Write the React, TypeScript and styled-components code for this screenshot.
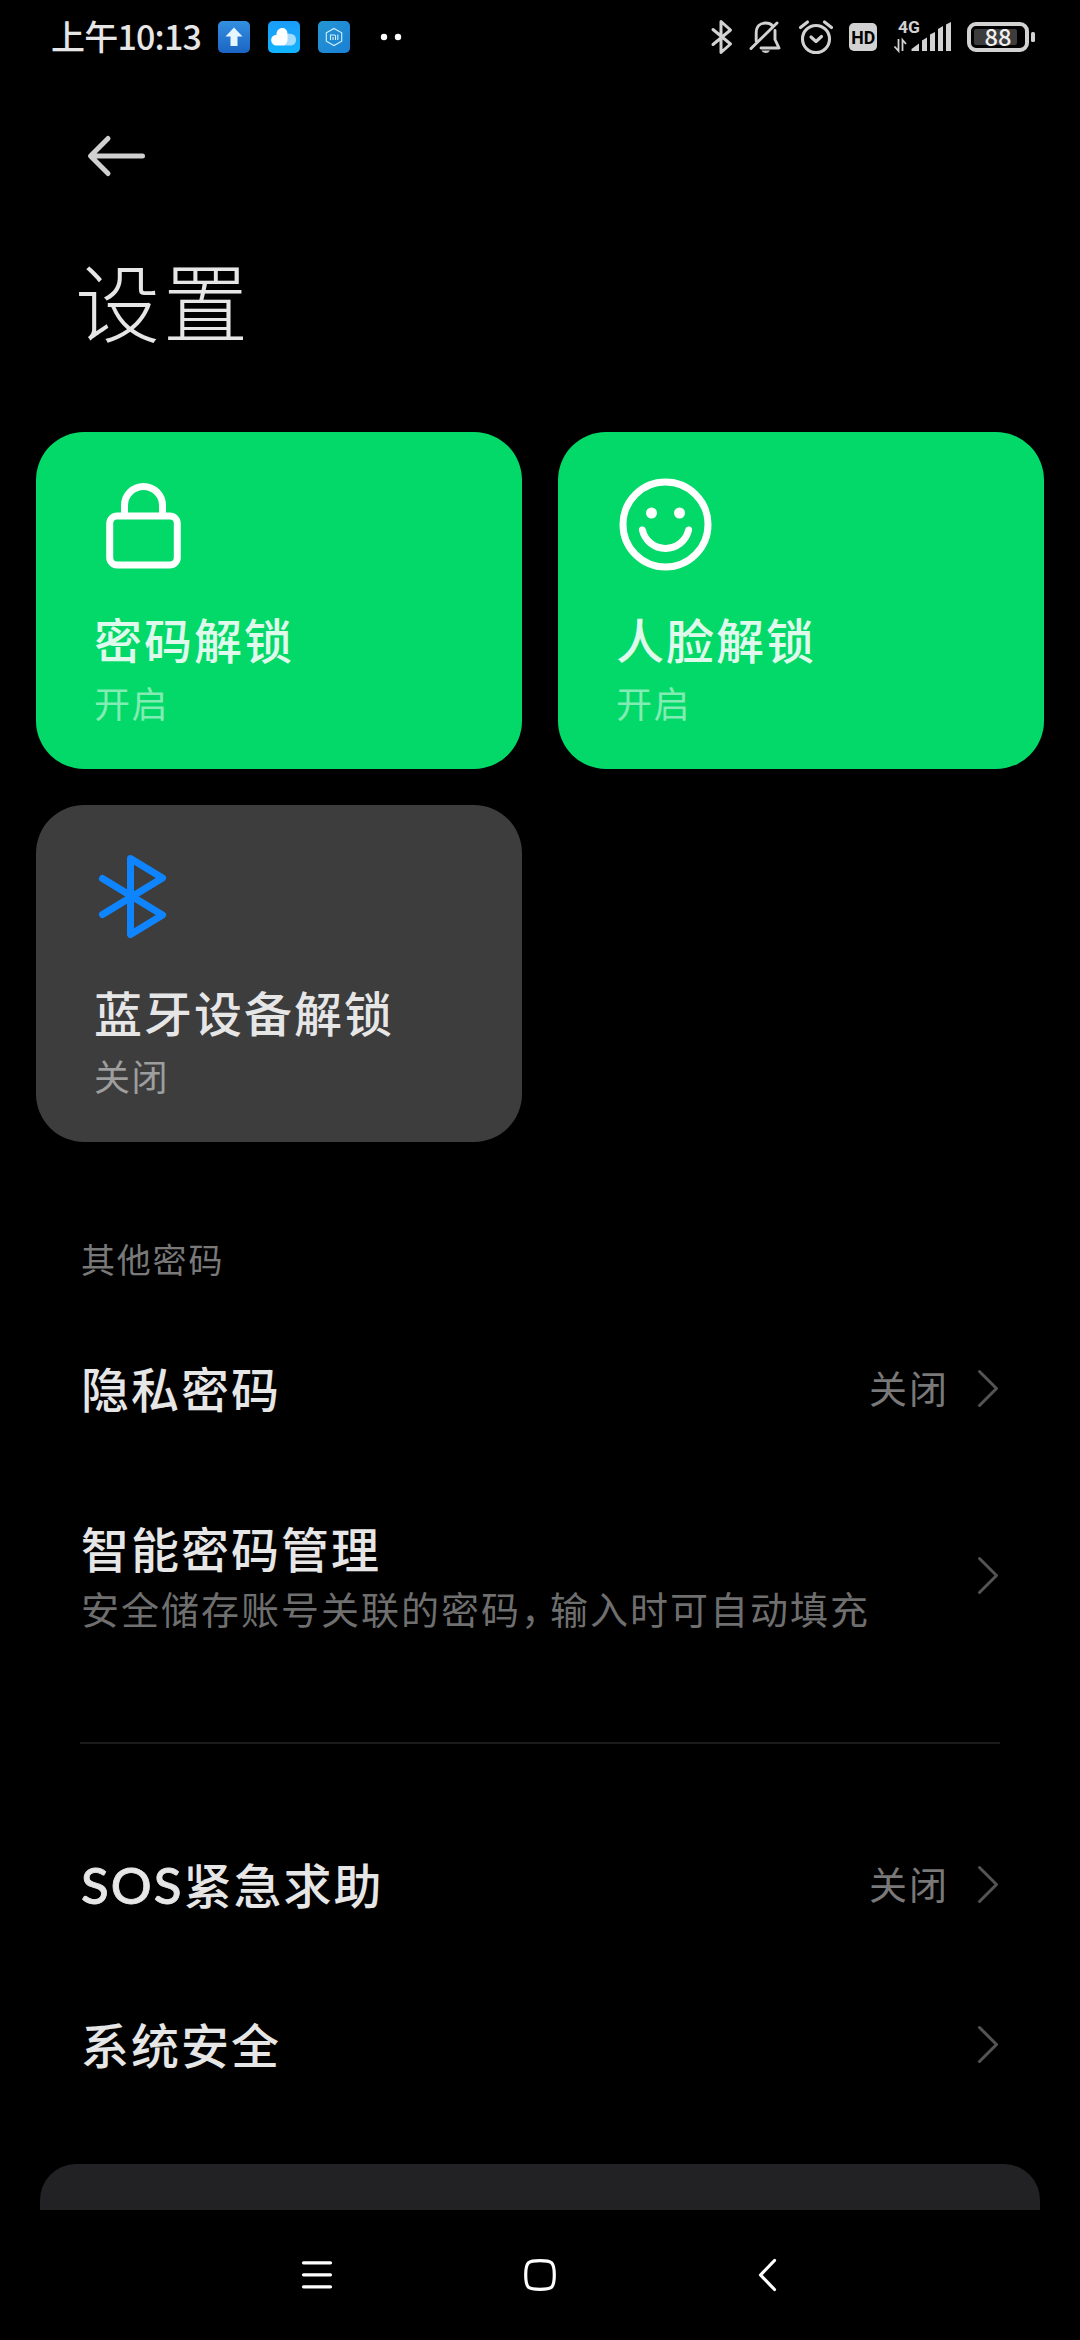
import React from "react";
import styled, { createGlobalStyle } from "styled-components";

const GlobalStyle = createGlobalStyle`
  * { box-sizing: border-box; }
  html, body { margin: 0; padding: 0; background: #000; }
  body { overflow: hidden; }
  svg { display: block; flex: none; }
`;

const Phone = styled.div`
  width: 1080px;
  height: 2340px;
  display: flex;
  flex-direction: column;
  background: #000;
  color: #e6e6e6;
  font-family: "Noto Sans CJK SC", "Noto Sans", sans-serif;
  overflow: hidden;
`;

const StatusBar = styled.header`
  height: 74px;
  flex: none;
  display: flex;
  align-items: center;
  justify-content: space-between;
  padding: 0 44px 0 51px;
`;

const StatusGroup = styled.div<{ $gap: number }>`
  display: flex;
  align-items: center;
  gap: ${(p) => p.$gap}px;
`;

const Clock = styled.div`
  width: 149px;
  margin-bottom: 2px;
  font-size: 34px;
  line-height: 50px;
  font-weight: 500;
  letter-spacing: -0.8px;
  white-space: nowrap;
`;

const Screen = styled.main`
  height: 2136px;
  flex: none;
  overflow: hidden;
`;

const TopBar = styled.div`
  height: 163px;
  display: flex;
  align-items: center;
  padding-left: 86px;
`;

const PageTitle = styled.h1`
  margin: 0 0 71px;
  padding-left: 75px;
  font-size: 85px;
  line-height: 124px;
  font-weight: 300;
  letter-spacing: 3px;
`;

const CardGrid = styled.section`
  display: grid;
  grid-template-columns: 486px 486px;
  grid-auto-rows: 337px;
  gap: 36px;
  padding: 0 36px;
`;

const Card = styled.div<{ $active: boolean }>`
  padding: 36px 0 0 58px;
  border-radius: 48px;
  background: ${(p) => (p.$active ? "#03d968" : "#3d3d3d")};
`;

const CardTitle = styled.div`
  margin-top: 26px;
  font-size: 48px;
  line-height: 64px;
  font-weight: 500;
  letter-spacing: 2px;
  color: rgba(255, 255, 255, 0.88);
`;

const CardState = styled.div`
  margin-top: 8px;
  font-size: 36px;
  line-height: 48px;
  letter-spacing: 1.5px;
  color: rgba(255, 255, 255, 0.5);
`;

const SectionLabel = styled.div`
  margin: 93px 0 25px;
  padding-left: 81px;
  font-size: 34px;
  line-height: 48px;
  letter-spacing: 1.8px;
  color: #797979;
`;

const Row = styled.div<{ $tall?: boolean }>`
  height: ${(p) => (p.$tall ? 214 : 160)}px;
  display: flex;
  align-items: center;
  padding: 0 80px 0 81px;
`;

const RowText = styled.div`
  flex: 1;
  white-space: nowrap;
`;

const RowTitle = styled.div<{ $single?: boolean }>`
  margin-bottom: ${(p) => (p.$single ? 2 : 0)}px;
  font-size: 48px;
  line-height: 66px;
  font-weight: 500;
  letter-spacing: 2px;
`;

const Latin = styled.span`
  font-family: Lato, "Noto Sans CJK SC", sans-serif;
  font-size: 51px;
  line-height: 1;
  letter-spacing: 2px;
  -webkit-text-stroke: 0.8px currentColor;
`;

const RowDetail = styled.div`
  font-size: 38px;
  line-height: 56px;
  letter-spacing: 2px;
  color: #6f6f6f;
`;

const Comma = styled.span`
  letter-spacing: -9px;
`;

const RowValue = styled.div`
  margin: 0 27px 2px 0;
  font-size: 38px;
  line-height: 56px;
  letter-spacing: 2px;
  color: #797979;
`;

const Divider = styled.hr`
  height: 2px;
  margin: 60px 80px;
  border: 0;
  background: #1a1a1a;
`;

const Panel = styled.div`
  height: 120px;
  margin: 40px 40px 0;
  border-radius: 36px;
  background: #222224;
`;

const NavBar = styled.nav`
  height: 130px;
  flex: none;
  display: flex;
  align-items: center;
  gap: 163px;
  padding-left: 287px;
`;

const tint = "#d2d2d2";

const UploadBadge = () => (
  <svg width="32" height="32" viewBox="0 0 32 32">
    <defs>
      <linearGradient id="upload" x1="0" y1="0" x2="0" y2="1">
        <stop offset="0" stopColor="#3390e0" />
        <stop offset="1" stopColor="#1b64c4" />
      </linearGradient>
    </defs>
    <rect width="32" height="32" rx="5" fill="url(#upload)" />
    <path d="M16 6.500 L24.500 15.500 H19.500 V25 H12.500 V15.500 H7.500 Z" fill="#e6f6ff" />
  </svg>
);

const CloudBadge = () => (
  <svg width="32" height="32" viewBox="0 0 32 32">
    <defs>
      <linearGradient id="cloud" x1="0" y1="0" x2="0" y2="1">
        <stop offset="0" stopColor="#1a9cf8" />
        <stop offset="1" stopColor="#12b4ff" />
      </linearGradient>
    </defs>
    <rect width="32" height="32" rx="5" fill="url(#cloud)" />
    <path d="M15 24.500 V17 a6 5.500 0 0 1 8-4 a5.800 5.800 0 0 1 0 11.500 Z" fill="#a3dcff" />
    <path d="M8.500 24.500 a5.400 5.400 0 0 1 0-10.800 C8.500 5 19.500 5 19.500 13 V19 a5.500 5.500 0 0 1-5.500 5.500 Z" fill="#fff" />
  </svg>
);

const MiBadge = () => (
  <svg width="32" height="32" viewBox="0 0 32 32">
    <defs>
      <linearGradient id="mi" x1="0" y1="0" x2="1" y2="1">
        <stop offset="0" stopColor="#2596d4" />
        <stop offset="1" stopColor="#1a80d4" />
      </linearGradient>
    </defs>
    <rect width="32" height="32" rx="5" fill="url(#mi)" />
    <g fill="none" stroke="#d5f0ff" strokeWidth="1.100">
      <path d="M16 7.500 L23.700 11.800 V20.200 L16 24.500 L8.300 20.200 V11.800 Z" />
      <path d="M12.500 19 V14 H16.500 Q17.500 14 17.500 15 V19 M15 16 V19 M19.800 13.600 V19" />
    </g>
  </svg>
);

const OverflowDots = () => (
  <svg width="34" height="32" viewBox="0 0 34 32" fill="#fff">
    <circle cx="16" cy="16" r="3.200" />
    <circle cx="30" cy="16" r="3.200" />
  </svg>
);

const StatusBluetooth = () => (
  <svg width="24" height="40" viewBox="0 0 24 40" fill="none" stroke={tint} strokeWidth="3" strokeLinecap="round" strokeLinejoin="round">
    <path d="M4 12.500 L21.500 27 L12 35.500 V4.500 L21.500 13 L4 27.500" />
  </svg>
);

const StatusMute = () => (
  <svg width="33" height="40" viewBox="0 0 33 40" fill="none" stroke={tint} strokeWidth="2.900" strokeLinecap="round" strokeLinejoin="round">
    <path d="M7.200 24 V16 C7.200 9.500 11 6 16.500 6 C19.500 6 22 7 23.500 8.800" />
    <path d="M26 13.500 V22.500 L30 31 H12" />
    <path d="M2 31.500 L28 6" />
    <path d="M12.500 33.500 H21 Q19.500 36 16.700 36 Q14 36 12.500 33.500 Z" fill={tint} stroke="none" />
  </svg>
);

const StatusAlarm = () => (
  <svg width="35" height="40" viewBox="0 0 35 40" fill="none" stroke={tint} strokeWidth="3.100" strokeLinecap="round" strokeLinejoin="round">
    <circle cx="18" cy="22" r="13.500" />
    <path d="M13 20 L18 24.500 L23.500 19.500" />
    <path d="M2.500 10.500 L9.500 5" />
    <path d="M26.500 5 L33.500 10.500" />
  </svg>
);

const StatusHd = () => (
  <svg width="28" height="40" viewBox="0 0 28 40">
    <rect y="6" width="28" height="28" rx="5" fill={tint} />
    <text x="14.200" y="27" textAnchor="middle" textLength="24" lengthAdjust="spacingAndGlyphs" fontFamily="Roboto, sans-serif" fontWeight="700" fontSize="18.500" fill="#000">HD</text>
  </svg>
);

const StatusNetwork = () => (
  <svg width="58" height="60" viewBox="0 -10 58 60" fill={tint}>
    <text x="5" y="15.500" textLength="22" lengthAdjust="spacingAndGlyphs" fontFamily="Roboto, sans-serif" fontWeight="700" fontSize="17">4G</text>
    <path d="M18.500 34 V32 L26 26.500 V34 Z" />
    <path d="M29 34 V23.500 L34 20.500 V34 Z" />
    <path d="M37 34 V17.500 L42 15 V34 Z" />
    <path d="M45 34 V12 L50 9 V34 Z" />
    <path d="M53 34 V7.500 L58 5 V34 Z" />
    <g fill="none" stroke={tint} strokeWidth="1.800">
      <path d="M5.500 22 V34 L1.500 29.500" />
      <path d="M9.500 34 V23 L13 27" />
    </g>
  </svg>
);

const StatusBattery = () => (
  <svg width="69" height="40" viewBox="0 0 69 40">
    <rect x="2" y="7" width="58" height="26" rx="7" fill="none" stroke={tint} strokeWidth="4" />
    <rect x="7" y="12" width="43" height="16" rx="2" fill="#3c3c3c" />
    <rect x="64" y="15" width="4" height="10" rx="1.500" fill={tint} />
    <text x="31" y="29" textAnchor="middle" textLength="27" lengthAdjust="spacingAndGlyphs" fontFamily='"Noto Sans CJK SC", sans-serif' fontWeight="500" fontSize="23" fill="#f0f0f0">88</text>
  </svg>
);

const BackArrow = () => (
  <svg width="60" height="44" viewBox="0 0 60 44" fill="none" stroke="#d0d0d0" strokeWidth="5" strokeLinecap="round" strokeLinejoin="round">
    <path d="M22 4.500 L4.500 22 L22 39.500 M5 22 H56.500" />
  </svg>
);

const cardIconProps = {
  width: 112,
  height: 112,
  viewBox: "0 0 112 112",
  fill: "none",
  strokeWidth: 7,
  strokeLinecap: "round" as const,
  strokeLinejoin: "round" as const,
};

const LockIcon = () => (
  <svg {...cardIconProps} stroke="#fff">
    <rect x="15.700" y="48" width="67.600" height="49" rx="7.500" />
    <path d="M30.500 47 V37.500 a19 19 0 0 1 38 0 V47" />
  </svg>
);

const FaceIcon = () => (
  <svg {...cardIconProps} stroke="#fff">
    <circle cx="49.500" cy="56.500" r="42.500" />
    <circle cx="35.500" cy="45" r="5.500" fill="#fff" stroke="none" />
    <circle cx="63.500" cy="45" r="5.500" fill="#fff" stroke="none" />
    <path d="M26.400 62 A23.700 23.700 0 0 0 72.600 62" />
  </svg>
);

const BluetoothIcon = () => (
  <svg {...cardIconProps} stroke="#0e85ff">
    <path d="M8.500 37.500 L68.500 74 L36.500 93.500 V17.500 L68.500 37 L8.500 73.500" />
  </svg>
);

const Chevron = () => (
  <svg width="24" height="44" viewBox="0 0 24 44" fill="none" stroke="#545454" strokeWidth="3" strokeLinecap="round" strokeLinejoin="round">
    <path d="M3.500 5.500 L20.500 22.500 L3.500 39.500" />
  </svg>
);

const navIconProps = {
  width: 60,
  height: 60,
  viewBox: "0 0 60 60",
  fill: "none",
  stroke: "#fff",
  strokeWidth: 3.2,
  strokeLinecap: "round" as const,
  strokeLinejoin: "round" as const,
};

const cards = [
  { title: "密码解锁", state: "开启", active: true, Icon: LockIcon },
  { title: "人脸解锁", state: "开启", active: true, Icon: FaceIcon },
  { title: "蓝牙设备解锁", state: "关闭", active: false, Icon: BluetoothIcon },
];

export default function App() {
  return (
    <>
      <GlobalStyle />
      <Phone>
        <StatusBar>
          <StatusGroup $gap={18}>
            <Clock>上午10:13</Clock>
            <UploadBadge />
            <CloudBadge />
            <MiBadge />
            <OverflowDots />
          </StatusGroup>
          <StatusGroup $gap={16}>
            <StatusBluetooth />
            <StatusMute />
            <StatusAlarm />
            <StatusHd />
            <StatusNetwork />
            <StatusBattery />
          </StatusGroup>
        </StatusBar>

        <Screen>
          <TopBar>
            <BackArrow />
          </TopBar>
          <PageTitle>设置</PageTitle>

          <CardGrid>
            {cards.map(({ title, state, active, Icon }) => (
              <Card key={title} $active={active}>
                <Icon />
                <CardTitle>{title}</CardTitle>
                <CardState>{state}</CardState>
              </Card>
            ))}
          </CardGrid>

          <SectionLabel>其他密码</SectionLabel>
          <Row>
            <RowText>
              <RowTitle $single>隐私密码</RowTitle>
            </RowText>
            <RowValue>关闭</RowValue>
            <Chevron />
          </Row>
          <Row $tall>
            <RowText>
              <RowTitle>智能密码管理</RowTitle>
              <RowDetail>
                安全储存账号关联的密码<Comma>，</Comma>输入时可自动填充
              </RowDetail>
            </RowText>
            <Chevron />
          </Row>
          <Divider />
          <Row>
            <RowText>
              <RowTitle $single>
                <Latin>SOS</Latin>紧急求助
              </RowTitle>
            </RowText>
            <RowValue>关闭</RowValue>
            <Chevron />
          </Row>
          <Row>
            <RowText>
              <RowTitle $single>系统安全</RowTitle>
            </RowText>
            <Chevron />
          </Row>
          <Panel />
        </Screen>

        <NavBar>
          <svg {...navIconProps}>
            <path d="M16.500 17.800 H43.500 M16.500 29.800 H43.500 M16.500 41.800 H43.500" />
          </svg>
          <svg {...navIconProps}>
            <path d="M30 15.700 C41.500 15.700 44.300 16.500 44.300 30 C44.300 43.500 41.500 44.300 30 44.300 C18.500 44.300 15.700 43.500 15.700 30 C15.700 16.500 18.500 15.700 30 15.700 Z" />
          </svg>
          <svg {...navIconProps}>
            <path d="M41.500 15.500 L27.500 30 L41.500 44.500" />
          </svg>
        </NavBar>
      </Phone>
    </>
  );
}
